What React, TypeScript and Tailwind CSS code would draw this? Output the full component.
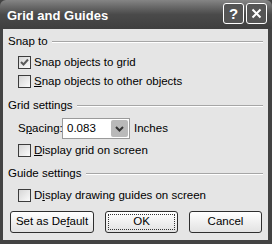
import { useState } from 'react';

function CheckBox({ checked }: { checked: boolean }) {
  return (
    <div className="w-[13px] h-[13px] shrink-0 border border-[#3c3c3c] bg-gradient-to-br from-[#d6d6d6] to-[#fbfbfb] flex items-center justify-center">
      {checked && (
        <svg width="9" height="9" viewBox="0 0 9 9">
          <path d="M1 4 L3.5 6.5 L8 1.5" fill="none" stroke="#5a5a5a" strokeWidth="2" />
        </svg>
      )}
    </div>
  );
}

function CheckRow({ checked, children }: { checked: boolean; children: React.ReactNode }) {
  return (
    <div className="h-[19px] flex items-center pl-[10px] gap-[3px]">
      <CheckBox checked={checked} />
      <span>{children}</span>
    </div>
  );
}

function GroupHeader({ label }: { label: string }) {
  return (
    <div className="h-[14px] flex items-center gap-[4px]">
      <span>{label}</span>
      <div className="flex-1 h-[2px] border-t border-[#a6a6a6] border-b border-b-white" />
    </div>
  );
}

function DlgButton({ children, focused }: { children: React.ReactNode; focused?: boolean }) {
  return (
    <button className="w-[73px] h-[22px] rounded-[3px] border border-[#2e2e2e] bg-gradient-to-b from-white to-[#e2e2e2] flex items-center justify-center p-[2px]">
      <span className={`w-full h-full flex items-center justify-center ${focused ? 'border border-dotted border-[#333]' : ''}`}>
        {children}
      </span>
    </button>
  );
}

export default function App() {
  const [snapGrid] = useState(true);

  return (
    <div
      className="w-[272px] h-[244px] bg-[#434343] flex flex-col text-[11.5px] text-black"
      style={{ fontFamily: '"Liberation Sans", Arial, sans-serif' }}
    >
      {/* Title bar */}
      <div className="h-[29px] shrink-0 flex items-center pl-[7px] pr-[5px] bg-gradient-to-b from-[#858585] via-[#4a4a4a] to-[#3f3f3f] rounded-t-[6px]">
        <span className="flex-1 text-white font-bold text-[13px] leading-none pt-[1px]">Grid and Guides</span>
        <div className="flex gap-[2px] -mt-[3px]">
          <div className="w-[21px] h-[21px] rounded-[3px] border border-white bg-[#555] flex items-center justify-center text-white font-bold text-[15px] leading-none">?</div>
          <div className="w-[21px] h-[21px] rounded-[3px] border border-white bg-[#555] flex items-center justify-center">
            <svg width="11" height="11" viewBox="0 0 11 11">
              <path d="M1.5 1.5 L9.5 9.5 M9.5 1.5 L1.5 9.5" stroke="white" strokeWidth="2" />
            </svg>
          </div>
        </div>
      </div>

      {/* Client area */}
      <div className="flex-1 ml-[3px] mr-[4px] mb-[4px] bg-[#e5e5e5] pl-[5px] pr-[5px] pt-[6px] flex flex-col">
        <GroupHeader label="Snap to" />
        <div className="mt-[4px]">
          <CheckRow checked={snapGrid}>Snap objects to grid</CheckRow>
          <CheckRow checked={false}><u>S</u>nap objects to other objects</CheckRow>
        </div>

        <div className="mt-[8px]">
          <GroupHeader label="Grid settings" />
        </div>
        <div className="mt-[5px] h-[21px] flex items-center pl-[10px]">
          <span className="w-[44px]">S<u>p</u>acing:</span>
          <div className="w-[68px] h-[21px] border border-[#9a9a9a] bg-white flex items-center pl-[4px] pr-[1px]">
            <span className="flex-1">0.083</span>
            <div className="w-[17px] h-[17px] bg-[#b9b9b9] rounded-[2px] flex items-center justify-center">
              <svg width="9" height="6" viewBox="0 0 9 6">
                <path d="M1 1 L4.5 4.5 L8 1" fill="none" stroke="#333" strokeWidth="2" />
              </svg>
            </div>
          </div>
          <span className="ml-[4px]">Inches</span>
        </div>
        <div className="mt-[2px]">
          <CheckRow checked={false}><u>D</u>isplay grid on screen</CheckRow>
        </div>

        <div className="mt-[7px]">
          <GroupHeader label="Guide settings" />
        </div>
        <div className="mt-[5px]">
          <CheckRow checked={false}>D<u>i</u>splay drawing guides on screen</CheckRow>
        </div>

        <div className="mt-[6px] flex gap-[11px] pl-[2px]">
          <button className="w-[84px] h-[22px] rounded-[3px] border border-[#2e2e2e] bg-gradient-to-b from-white to-[#e2e2e2] flex items-center justify-center">
            Set as De<u>f</u>ault
          </button>
          <DlgButton focused>OK</DlgButton>
          <DlgButton>Cancel</DlgButton>
        </div>
      </div>
    </div>
  );
}
